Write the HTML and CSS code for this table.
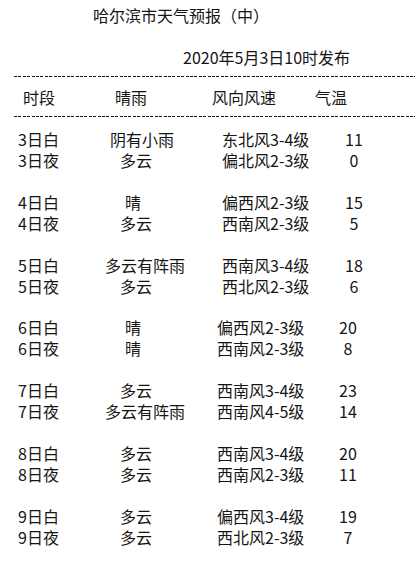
FILE: index.html
```html
<!DOCTYPE html>
<html lang="zh-CN">
<head>
<meta charset="utf-8">
<title>哈尔滨市天气预报（中）</title>
<link rel="stylesheet" href="styles.css">
</head>
<body>
<div class="page">
  <div class="title">哈尔滨市天气预报（中）</div>
  <div class="date">2020年5月3日10时发布</div>
  <div class="dash dash-top"></div>
  <div class="head">
    <span>时段</span>
    <span>晴雨</span>
    <span>风向风速</span>
    <span>气温</span>
  </div>
  <div class="dash dash-bottom"></div>

  <div class="groups">
    <div class="group g-a">
      <div class="row"><span>3日白</span><span class="wx i5">阴有小雨</span><span class="wind">东北风3-4级</span><span class="temp">11</span></div>
      <div class="row"><span>3日夜</span><span class="wx i15">多云</span><span class="wind">偏北风2-3级</span><span class="temp">0</span></div>
    </div>
    <div class="group g-a">
      <div class="row"><span>4日白</span><span class="wx i20">晴</span><span class="wind">偏西风2-3级</span><span class="temp">15</span></div>
      <div class="row"><span>4日夜</span><span class="wx i15">多云</span><span class="wind">西南风2-3级</span><span class="temp">5</span></div>
    </div>
    <div class="group g-a">
      <div class="row"><span>5日白</span><span class="wx">多云有阵雨</span><span class="wind">西南风3-4级</span><span class="temp">18</span></div>
      <div class="row"><span>5日夜</span><span class="wx i15">多云</span><span class="wind">西北风2-3级</span><span class="temp">6</span></div>
    </div>
    <div class="group">
      <div class="row"><span>6日白</span><span class="wx i20">晴</span><span class="wind">偏西风2-3级</span><span class="temp">20</span></div>
      <div class="row"><span>6日夜</span><span class="wx i20">晴</span><span class="wind">西南风2-3级</span><span class="temp">8</span></div>
    </div>
    <div class="group">
      <div class="row"><span>7日白</span><span class="wx i15">多云</span><span class="wind">西南风3-4级</span><span class="temp">23</span></div>
      <div class="row"><span>7日夜</span><span class="wx">多云有阵雨</span><span class="wind">西南风4-5级</span><span class="temp">14</span></div>
    </div>
    <div class="group">
      <div class="row"><span>8日白</span><span class="wx i15">多云</span><span class="wind">西南风3-4级</span><span class="temp">20</span></div>
      <div class="row"><span>8日夜</span><span class="wx i15">多云</span><span class="wind">西南风2-3级</span><span class="temp">11</span></div>
    </div>
    <div class="group">
      <div class="row"><span>9日白</span><span class="wx i15">多云</span><span class="wind">偏西风3-4级</span><span class="temp">19</span></div>
      <div class="row"><span>9日夜</span><span class="wx i15">多云</span><span class="wind">西北风2-3级</span><span class="temp">7</span></div>
    </div>
  </div>
</div>
</body>
</html>
```
FILE: styles.css
```css
html, body {
  margin: 0;
  padding: 0;
  background: #ffffff;
}

body {
  font-family: "Noto Sans CJK SC", "Noto Sans", sans-serif;
  font-size: 16px;
  color: #151515;
  width: 415px;
  overflow: hidden;
}

.page {
  display: flex;
  flex-direction: column;
}

.title {
  margin-top: 4px;
  padding-left: 93px;
  line-height: 22px;
  white-space: nowrap;
}

.date {
  margin-top: 20px;
  padding-left: 183px;
  line-height: 22px;
  white-space: nowrap;
}

.dash {
  height: 1px;
  margin-left: 14px;
  background: repeating-linear-gradient(to right, #141414 0 3px, transparent 3px 4.4px);
}

.dash-top {
  margin-top: 8px;
}

.head {
  margin-top: 9px;
  display: grid;
  grid-template-columns: 92px 97px 103px auto;
  padding-left: 23px;
  line-height: 22px;
}

.dash-bottom {
  margin-top: 8px;
}

.groups {
  margin-top: 12px;
  display: flex;
  flex-direction: column;
  gap: 20.8px;
}

.row {
  display: grid;
  grid-template-columns: 87px 112px 111px 40px;
  padding-left: 18px;
  line-height: 21px;
  white-space: nowrap;
}

.wx.i5 { padding-left: 5px; }
.wx.i15 { padding-left: 15px; }
.wx.i20 { padding-left: 20px; }

.temp {
  text-align: center;
}

.g-a .wind {
  padding-left: 5px;
}

.g-a .temp {
  padding-left: 12px;
}
```
